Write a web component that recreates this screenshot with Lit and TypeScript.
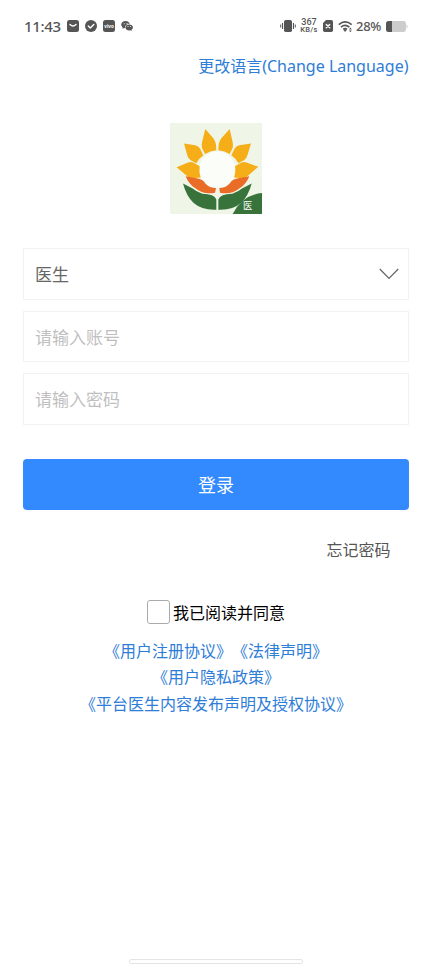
import { LitElement, html, css } from "lit";
import { customElement } from "lit/decorators.js";

@customElement("status-bar")
class StatusBar extends LitElement {
  static styles = css`
    :host { display: flex; align-items: center; height: 52px; padding: 0 24px; box-sizing: border-box; color: #555; font-family: "Noto Sans", sans-serif; font-weight: 500; }
    svg { display: block; flex: none; fill: #555; }
    .time { width: 43px; font-size: 15px; letter-spacing: -0.3px; line-height: 20px; margin-top: -1px; white-space: nowrap; }
    .left { display: flex; gap: 6px; align-items: center; }
    .right { display: flex; align-items: center; margin-left: auto; }
    .speed { width: 20px; margin: 0 4px 0 3px; font: 500 9px/8px Roboto, sans-serif; text-align: center; white-space: nowrap; }
    .unit { font-size: 7.5px; line-height: 8px; letter-spacing: 0.3px; }
    .wifi { margin: 0 3px 0 5px; }
    .percent { width: 27px; margin-right: 3px; font-size: 13px; letter-spacing: -0.3px; white-space: nowrap; }
    .line { fill: none; stroke: #fff; stroke-width: 1.4; stroke-linecap: round; stroke-linejoin: round; }
    .dark { fill: none; stroke: #555; stroke-width: 1.6; }
    .tiny { fill: #fff; font: 700 4.6px "Noto Sans", sans-serif; }
    .dot { fill: #fff; }
    .pale { fill: #ccc; }
  `;
  render() {
    return html`
      <span class="time">11:43</span>
      <div class="left">
        <svg width="12" height="12" viewBox="0 0 12 12"><rect width="12" height="12" rx="2.5"/><path class="line" d="M3 4.4Q6 7.6 9 4.4"/></svg>
        <svg width="12" height="12" viewBox="0 0 12 12"><circle cx="6" cy="6" r="6"/><path class="line" d="M3.3 6.1 5.3 8.1 8.8 4.5"/></svg>
        <svg width="12" height="12" viewBox="0 0 12 12"><rect width="12" height="12" rx="2.5"/><text class="tiny" x="6" y="7.6" text-anchor="middle" textLength="9.5">vivo</text></svg>
        <svg width="12" height="12" viewBox="0 0 12 12"><path d="M4.7 1C2.1 1 .2 2.6.2 4.6c0 1.1.6 2.1 1.5 2.8l-.3 1.5 1.6-.9 1.2.2C3.8 5.4 5.8 3.8 8.8 3.8 8.2 2.1 6.6 1 4.7 1Z"/><path d="M8.2 4.4c-2.1 0-3.7 1.3-3.7 3s1.6 3 3.7 3l1.2-.2 1.4.8-.3-1.3c.8-.5 1.4-1.4 1.4-2.3 0-1.7-1.6-3-3.7-3Z"/><g class="dot"><circle cx="3.2" cy="3.8" r=".55"/><circle cx="6" cy="3.5" r=".55"/><circle cx="7" cy="6.6" r=".5"/><circle cx="9.5" cy="6.6" r=".5"/></g></svg>
      </div>
      <div class="right">
        <svg width="16" height="14" viewBox="0 0 16 14"><rect x="4" y="1" width="8" height="12" rx="1.8"/><path d="M2 4h1.1v6H2zM.2 5.5h1v3h-1zM12.9 4H14v6h-1.1zM14.8 5.5h1v3h-1z"/></svg>
        <div class="speed"><div>367</div><div class="unit">KB/s</div></div>
        <svg width="10" height="12" viewBox="0 0 10 12"><path d="M3 0h5.2Q10 0 10 1.8v8.4Q10 12 8.2 12H1.8Q0 12 0 10.2V3Z"/><path class="line" d="M3.3 4.4 6.7 7.8M6.7 4.4 3.3 7.8"/></svg>
        <svg class="wifi" width="15" height="13" viewBox="0 0 15 13"><path class="dark" d="M.8 4.6Q7 -.8 13.7 4.6M3 7.1Q7 3.7 11.4 7.1M5.2 9.4Q7.1 7.8 9 9.4"/><path d="M5.5 10 7.1 9 8.700 10 7.100 12ZM11 9.400 12.400 7.600 13.800 9.400ZM11 10.400h2.800l-1.400 1.800Z"/></svg>
        <span class="percent">28%</span>
        <svg width="22" height="11" viewBox="0 0 22 11"><path class="pale" d="M6 0h11.600Q20 0 20 2.400v6.200Q20 11 17.600 11H6ZM20.600 3.500Q21.600 3.700 21.600 5.500T20.600 7.500Z"/><path d="M2.500 0H6v11H2.500Q0 11 0 8.500v-6Q0 0 2.500 0Z"/></svg>
      </div>`;
  }
}

@customElement("sunflower-logo")
class SunflowerLogo extends LitElement {
  static styles = css`
    :host { display: block; width: 92px; height: 91px; }
    svg { display: block; }
    .bg { fill: #eff6e7; }
    .petal { fill: #f6ae18; }
    .orange { fill: #ea6d27; }
    .leaf { fill: #38733b; }
    .core { fill: #fbfef8; }
    .mark { fill: #fff; font: 28px "Noto Sans CJK SC", sans-serif; }
  `;
  render() {
    return html`<svg width="92" height="91" viewBox="30 22 276 274" preserveAspectRatio="none">
      <rect class="bg" x="30" y="22" width="276" height="274"/>
      <circle class="core" cx="172" cy="163" r="55"/>
      <g class="petal">
        <path d="M136 40 160 68Q167 77 168 87L169 104Q150 106 135 115L126 97Q124 90 126 80Z"/>
        <path d="M209 40 184 68Q177 77 176 87L175 104Q194 106 209 115L218 97Q220 90 218 80Z"/>
        <path d="M72 84 106 89Q116 91 120 99L130 119Q116 129 109 143L92 134Q84 129 82 120Z"/>
        <path d="M273 84 238 89Q228 91 224 99L214 119Q228 129 235 143L252 134Q260 129 262 120Z"/>
        <path d="M50 155 84 141Q92 137 101 142L119 152Q116 170 122 186L98 188Q87 188 79 180Z"/>
        <path d="M295 154 260 141Q252 137 243 142L225 152Q228 170 222 186L246 188Q257 188 265 180Z"/>
      </g>
      <path class="orange" d="M77 182 110 188Q129 191 136 204 149 218 168 218L165 232Q130 239 105 218 86 205 77 182ZM268 182 235 188Q216 191 209 204 196 218 178 218L180 232Q215 239 240 218 259 205 268 182Z"/>
      <path class="leaf" d="M69 204 98 219Q108 228 127 235 163 236 169 252V283Q126 285 101 263 79 242 69 204ZM275 204 246 219Q236 228 217 235 181 236 175 252V283Q218 285 243 263 265 242 275 204Z"/>
      <path class="leaf" d="M218 296Q248 238 306 233V296Z"/>
      <text class="mark" x="249" y="281">医</text>
    </svg>`;
  }
}

@customElement("app-root")
class AppRoot extends LitElement {
  static styles = css`
    :host { display: flex; flex-direction: column; height: 964px; background: #fff; font-family: "Noto Sans", "Noto Sans CJK SC", sans-serif; font-size: 16px; text-spacing-trim: space-all; overflow: hidden; }
    .language { align-self: flex-end; height: 30px; line-height: 29px; margin-right: 23.5px; color: #2e7dd7; white-space: nowrap; }
    .logo { align-self: center; margin: 41px 0 34px; }
    form { display: flex; flex-direction: column; gap: 11px; margin: 0 23px; }
    .field { display: flex; justify-content: space-between; align-items: center; box-sizing: border-box; height: 51.5px; padding: 0 9px 0 11px; border: 1px solid #f2f2f2; color: #bfbfbf; font-size: 17px; }
    .role { color: #666; }
    .chevron { fill: none; stroke: #666; stroke-width: 1.3; }
    .login { height: 51px; margin-top: 23px; padding: 0; border: 0; border-radius: 4px; background: #338aff; color: #fff; font: 18px "Noto Sans CJK SC", sans-serif; }
    .forgot { align-self: flex-end; margin: 28px 41.5px 0 0; line-height: 24px; color: #555; }
    .agree { display: flex; align-items: center; align-self: center; gap: 3px; height: 24px; margin-top: 38px; color: #000; }
    .box { box-sizing: border-box; width: 23px; height: 24px; border: 1px solid #aaa; border-radius: 3px; }
    .links { margin-top: 14px; text-align: center; line-height: 26.5px; color: #2e7dd7; }
    .home { align-self: center; box-sizing: border-box; width: 174px; height: 5px; margin-top: auto; border: 1px solid #e4e4e4; border-radius: 2px; }
  `;
  render() {
    return html`
      <status-bar></status-bar>
      <div class="language">更改语言(Change Language)</div>
      <sunflower-logo class="logo"></sunflower-logo>
      <form>
        <div class="field role"><span>医生</span><svg width="20" height="12" viewBox="0 0 20 12"><path class="chevron" d="M.8 1 10 10.4 19.2 1"/></svg></div>
        <div class="field">请输入账号</div>
        <div class="field">请输入密码</div>
        <button class="login" type="button">登录</button>
      </form>
      <div class="forgot">忘记密码</div>
      <div class="agree"><span class="box"></span><span>我已阅读并同意</span></div>
      <div class="links">
        <div>《用户注册协议》《法律声明》</div>
        <div>《用户隐私政策》</div>
        <div>《平台医生内容发布声明及授权协议》</div>
      </div>
      <div class="home"></div>`;
  }
}
